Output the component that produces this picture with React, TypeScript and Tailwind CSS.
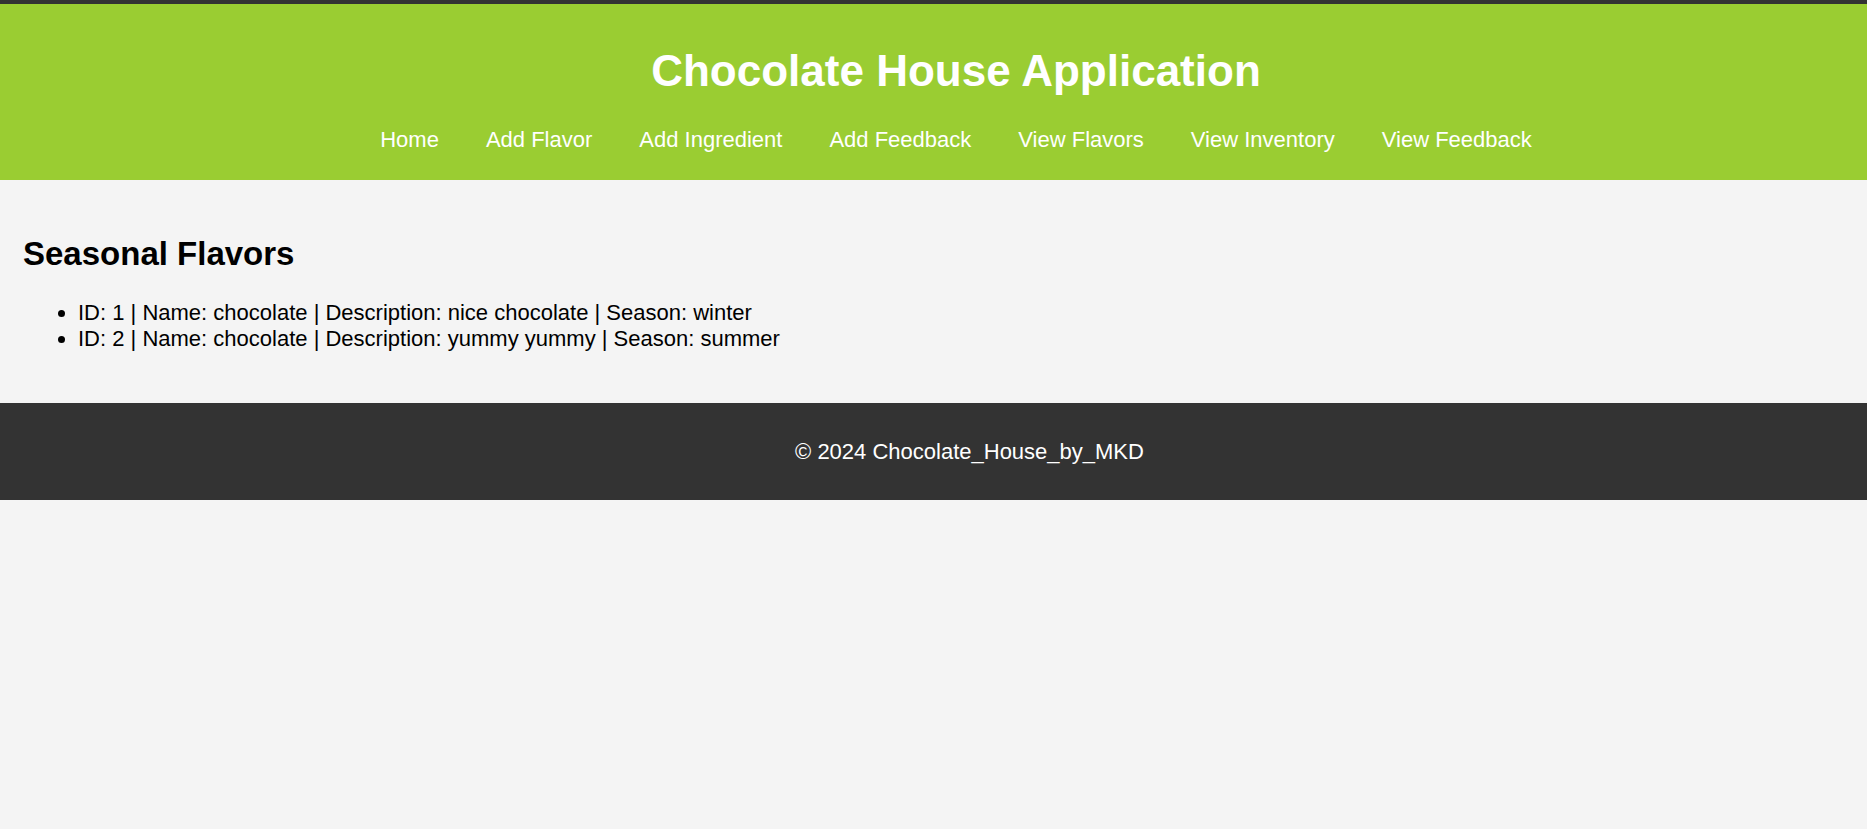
const links = ['Home', 'Add Flavor', 'Add Ingredient', 'Add Feedback', 'View Flavors', 'View Inventory', 'View Feedback'];

const flavors = [
  { id: 1, name: 'chocolate', description: 'nice chocolate', season: 'winter' },
  { id: 2, name: 'chocolate', description: 'yummy yummy', season: 'summer' },
];

export default function App() {
  return (
    <div className="min-h-[829px] bg-[#f4f4f4] text-black font-['Liberation_Sans',Arial,sans-serif]">
      <div className="h-[4px] bg-[#333]" />
      <header className="bg-[#9acd32] text-white text-center pt-[42px] pb-[28px] pl-[45px]">
        <h1 className="text-[44px] leading-[1.15] font-bold mb-[30px]">Chocolate House Application</h1>
        <nav>
          <ul className="flex justify-center gap-[47px] text-[22px] leading-[1.15]">
            {links.map((l) => (
              <li key={l}>
                <a href="#" className="text-white">{l}</a>
              </li>
            ))}
          </ul>
        </nav>
      </header>

      <main className="px-[23px] pt-[55px] pb-[29px]">
        <h2 className="text-[33px] leading-[1.15] font-bold mb-[27px]">Seasonal Flavors</h2>
        <ul className="list-disc pl-[55px] text-[22px] leading-[26px] mb-[22px]">
          {flavors.map((f) => (
            <li key={f.id}>
              ID: {f.id} | Name: {f.name} | Description: {f.description} | Season: {f.season}
            </li>
          ))}
        </ul>
      </main>

      <footer className="bg-[#333] text-white text-center py-[36px] pl-[72px] text-[22px] leading-[1.15]">
        <p>© 2024 Chocolate_House_by_MKD</p>
      </footer>
    </div>
  );
}
